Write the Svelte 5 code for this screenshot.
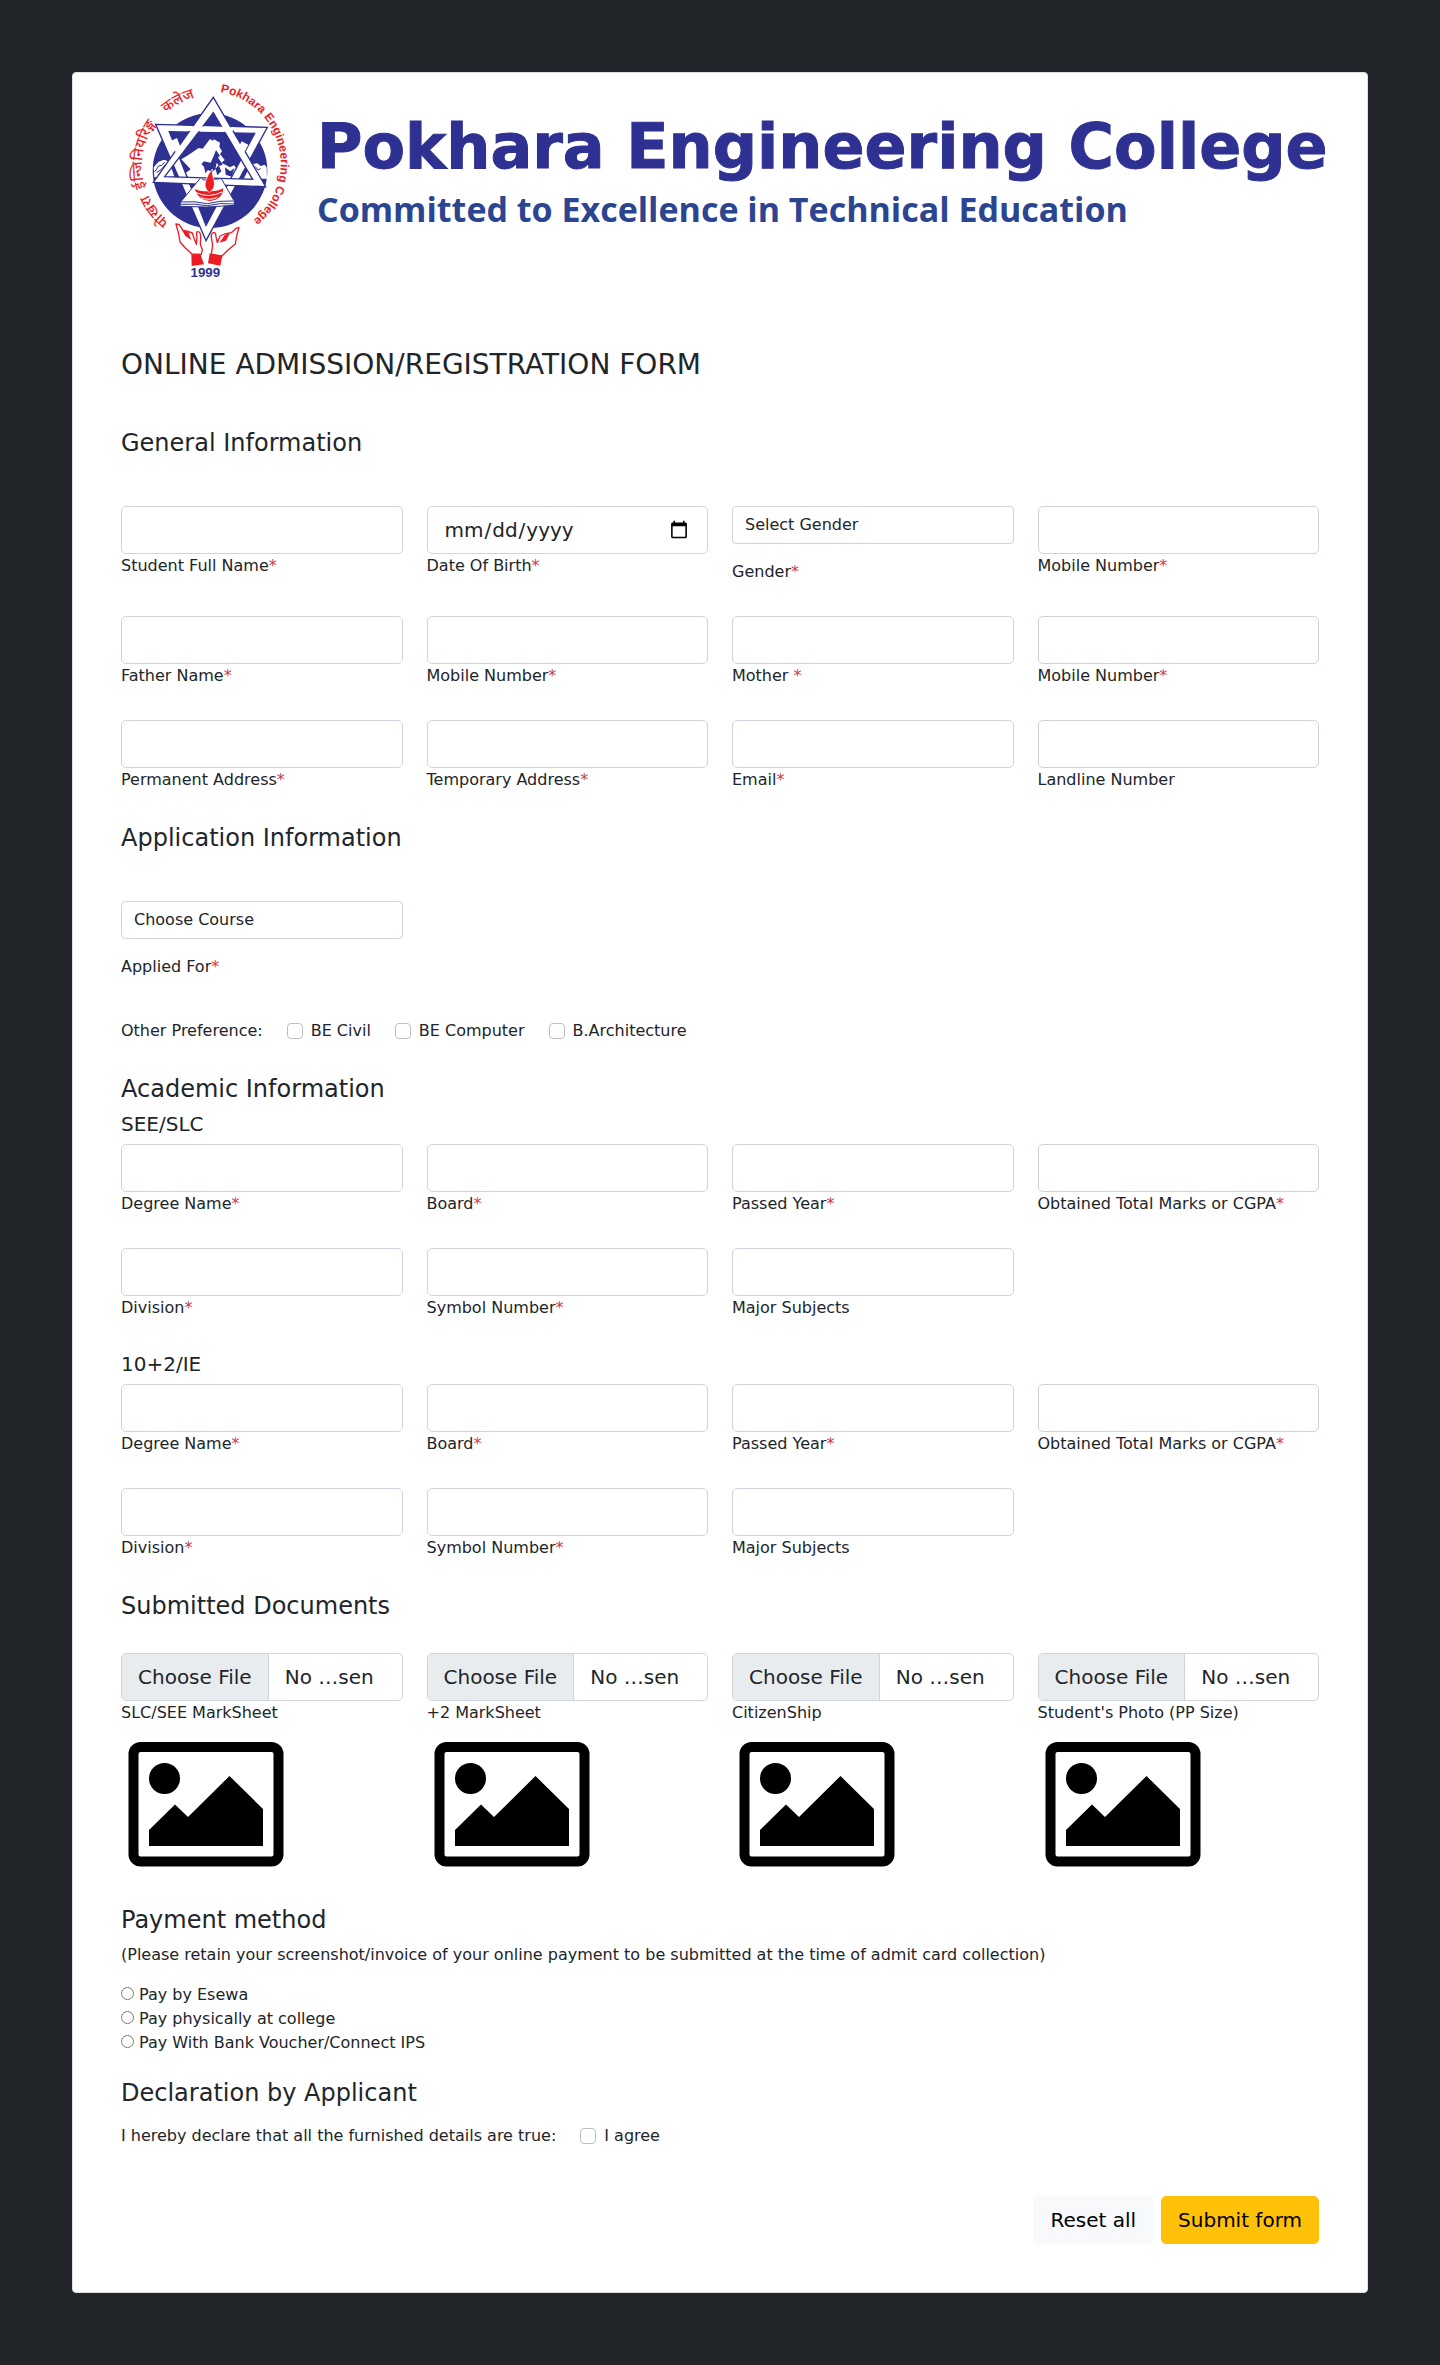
<script>
  const general = [
    [
      { id: 'student', label: 'Student Full Name', req: true },
      { id: 'dob', label: 'Date Of Birth', req: true, type: 'date' },
      { id: 'gender', label: 'Gender', req: true, options: ['Select Gender', 'Male', 'Female', 'Other'] },
      { id: 'mobile', label: 'Mobile Number', req: true, type: 'tel' }
    ],
    [
      { id: 'father', label: 'Father Name', req: true },
      { id: 'father-mobile', label: 'Mobile Number', req: true, type: 'tel' },
      { id: 'mother', label: 'Mother ', req: true },
      { id: 'mother-mobile', label: 'Mobile Number', req: true, type: 'tel' }
    ],
    [
      { id: 'permanent', label: 'Permanent Address', req: true },
      { id: 'temporary', label: 'Temporary Address', req: true },
      { id: 'email', label: 'Email', req: true, type: 'email' },
      { id: 'landline', label: 'Landline Number', type: 'tel' }
    ]
  ];

  const application = [
    { id: 'course', label: 'Applied For', req: true, options: ['Choose Course', 'BE Civil', 'BE Computer', 'B.Architecture'] }
  ];

  const academic = (prefix) => [
    [
      { id: prefix + '-degree', label: 'Degree Name', req: true },
      { id: prefix + '-board', label: 'Board', req: true },
      { id: prefix + '-year', label: 'Passed Year', req: true },
      { id: prefix + '-marks', label: 'Obtained Total Marks or CGPA', req: true }
    ],
    [
      { id: prefix + '-division', label: 'Division', req: true },
      { id: prefix + '-symbol', label: 'Symbol Number', req: true },
      { id: prefix + '-major', label: 'Major Subjects' }
    ]
  ];

  const levels = [
    { title: 'SEE/SLC', rows: academic('see') },
    { title: '10+2/IE', rows: academic('plus2') }
  ];

  const preferences = ['BE Civil', 'BE Computer', 'B.Architecture'];
  const documents = ['SLC/SEE MarkSheet', '+2 MarkSheet', 'CitizenShip', "Student's Photo (PP Size)"];
  const payments = ['Pay by Esewa', 'Pay physically at college', 'Pay With Bank Voucher/Connect IPS'];
</script>

{#snippet fieldRow(fields)}
  <div class="row">
    {#each fields as f}
      <div class="field">
        {#if f.options}
          <select id={f.id} class="select">
            {#each f.options as o}<option>{o}</option>{/each}
          </select>
        {:else}
          <input id={f.id} class="control" type={f.type ?? 'text'} />
        {/if}
        <label for={f.id}>{f.label}{#if f.req}<span class="req">*</span>{/if}</label>
      </div>
    {/each}
  </div>
{/snippet}

<main class="card">
  <header class="banner">
    <svg class="logo" viewBox="33 9 528 636" role="img" aria-label="Pokhara Engineering College emblem">
      <defs>
        <path id="arc-right" d="M331 66A217 217 0 0 1 297 497" />
        <path id="arc-left" d="M179 454A210 210 0 0 1 308 77" />
      </defs>
      <circle cx="300" cy="302" r="172" fill="#2e3192" />
      <path fill="#fff" d="M131 292l14-16 16-7 14 5 12 28 6 18-60 2zM416 296l12-14 14-2 10 8 12-4 6 8 1 34-70 0z" />
      <path fill="none" stroke="#2e3192" stroke-width="3" d="M134 306l12-18 10-2 8-10M140 308l14-10 12-14M436 290l8 10 8-4M440 310l12 14" />
      <path fill="#fff" d="M214 268l20-12 32-22 12 2 22-29 8 5 4-4 18 10-2 12 8 14-6 8 14 18-10 8 26 14 12-6 8 10-26 44H246l-20-30 16-12z" />
      <path fill="#2e3192" d="M274 282l8-8 20 4 10-22 6-16 12 18-6 4 14 22-10 4-8-10-4 20-10 8-12-6-8 10-4-20zM316 296l10-10 8 18-12 12zM345 292l16 12 12-10-8 26-18-6z" />
      <g fill="#fff" stroke="#2e3192" stroke-width="4" fill-rule="evenodd">
        <path d="M137 163L472 172L288 512ZM178 185L288 466L434 190Z" />
        <path d="M310 82L467 350L130 337ZM310 128L164 320L428 328Z" />
      </g>
      <path fill="#fff" d="M224 168l150 4-8 14-150-4zM183 212l18-8 16 42-14 16zM395 214l20 10-20 38-14-22z" />
      <path fill="#fff" stroke="#2e3192" stroke-width="3" d="M273 322L212 396l-2 13 80 2 84-5-2-14-38-66-24 2-30 2z" />
      <path fill="none" stroke="#2e3192" stroke-width="3" d="M212 396q40-4 80 5 36-10 78-8M213 403q40-3 79 4 40-10 80-5" />
      <path fill="#ed1c24" d="M254 357q16 8 44 7 28 0 42-9-2 34-40 38-36-2-46-36z" />
      <path fill="#ed1c24" stroke="#fff" stroke-width="2" d="M307 297q-2 16 5 34 6 24-14 37-18-14-11-35 6-20 20-36z" />
      <path fill="none" stroke="#fff" stroke-width="3" d="M258 368q38 18 78-2M272 382q24 12 50 0" />
      <path fill="#fff" stroke="#ed1c24" stroke-width="4" stroke-linejoin="round" d="M246 552l-20-18-16-18-4-24-8-30 9 1 12 18 10 2 18 6 6 18 6 16 2-22q-4-17 3-16 8 0 8 16l-1 22 6 16-3 14z" />
      <path fill="#ed1c24" d="M206 463l11 18 18 5 9 24-18-12zM244 553l27-1 11 31-37 5z" />
      <path fill="#fff" stroke="#ed1c24" stroke-width="4" stroke-linejoin="round" d="M336 558l18-18 22-18 4-24 7-26-10 4-13 12-20 4-14 6-8 20-4-18q-1-15-8-12-7 2-6 14l4 24-4 28z" />
      <path fill="#ed1c24" d="M360 488l-16 8-16 22 20-6zM299 550l38 7-6 30-37-7z" />
      <text class="ring latin"><textPath href="#arc-right">Pokhara Engineering College</textPath></text>
      <text class="ring nepali"><textPath href="#arc-left">पोखरा</textPath></text>
      <text class="ring nepali"><textPath href="#arc-left" startOffset="126">ईन्जिनियरिङ्ग</textPath></text>
      <text class="ring nepali"><textPath href="#arc-left" startOffset="372">कलेज</textPath></text>
      <text class="year" x="286" y="620">1999</text>
    </svg>
    <div class="names">
      <p class="college">Pokhara Engineering College</p>
      <p class="motto">Committed to Excellence in Technical Education</p>
    </div>
  </header>

  <form onsubmit={(e) => e.preventDefault()}>
    <h1>ONLINE ADMISSION/REGISTRATION FORM</h1>

    <h2 class="spaced">General Information</h2>
    {#each general as r}{@render fieldRow(r)}{/each}

    <h2 class="spaced">Application Information</h2>
    {@render fieldRow(application)}
    <div class="inline prefs">
      <span>Other Preference:</span>
      {#each preferences as p}
        <label class="check"><input type="checkbox" />{p}</label>
      {/each}
    </div>

    <h2>Academic Information</h2>
    {#each levels as l}
      <h3>{l.title}</h3>
      {#each l.rows as r}{@render fieldRow(r)}{/each}
    {/each}

    <h2 class="docs">Submitted Documents</h2>
    <div class="row">
      {#each documents as d, i}
        <div class="field">
          <input id={'doc' + i} class="control file" type="file" />
          <label for={'doc' + i}>{d}</label>
          <svg class="preview" viewBox="0 0 170 149" aria-hidden="true">
            <rect x="12.5" y="22" width="145" height="114.5" rx="7" fill="none" stroke="#000" stroke-width="10" />
            <circle cx="43.5" cy="53.5" r="15.5" />
            <path d="M28 105l26-25.500 13 12.500 41.500-41 33.500 33v37H28z" />
          </svg>
        </div>
      {/each}
    </div>

    <h2>Payment method</h2>
    <p class="note">(Please retain your screenshot/invoice of your online payment to be submitted at the time of admit card collection)</p>
    <div class="radios">
      {#each payments as p}
        <label><input type="radio" name="payment" />{p}</label>
      {/each}
    </div>

    <h2 class="declare">Declaration by Applicant</h2>
    <div class="inline">
      <span>I hereby declare that all the furnished details are true:</span>
      <label class="check"><input type="checkbox" />I agree</label>
    </div>

    <div class="actions">
      <button type="reset" class="btn light">Reset all</button>
      <button type="submit" class="btn warning">Submit form</button>
    </div>
  </form>
</main>

<style>
  :global(body) {
    background: #212529;
    color: #212529;
    font-family: "DejaVu Sans", sans-serif;
    font-size: 16px;
    line-height: 24px;
  }
  .card, .card * { box-sizing: border-box; }
  .card {
    margin: 72px 5%;
    padding: 0 48px 48px;
    background: #fff;
    border: 1px solid #dedfdf;
    border-radius: 4px;
  }
  .banner { display: flex; gap: 20px; height: 274px; }
  .logo { flex: none; width: 176px; height: 212px; }
  .ring { fill: #ed1c24; }
  .latin { font: bold 36px "Liberation Sans", sans-serif; }
  .nepali { font: 500 44px "Noto Sans", "Noto Sans Devanagari", sans-serif; }
  .year { fill: #2e3192; font: bold 40px "Liberation Sans", sans-serif; text-anchor: middle; }
  .names { padding-top: 38px; white-space: nowrap; }
  .names p { margin: 0; }
  .college {
    color: #2e3192;
    font: bold 62px/72px "DejaVu Sans", sans-serif;
    -webkit-text-stroke: 1px #2e3192;
  }
  .names .motto {
    margin-top: 2px;
    color: #2b4590;
    font: 700 34px/48px "Open Sans", sans-serif;
  }
  h1, h2, h3 { margin: 0; font-weight: 400; }
  h1 { font-size: 28px; line-height: 36px; margin-bottom: 46px; }
  h2 { font-size: 24px; line-height: 29px; margin-bottom: 8px; }
  h2.spaced { margin-bottom: 48px; }
  h2.docs { margin-bottom: 32px; }
  h3 { font-size: 20px; line-height: 24px; margin-bottom: 8px; }
  .row {
    display: grid;
    grid-template-columns: repeat(4, minmax(0, 1fr));
    column-gap: 24px;
    margin-bottom: 32px;
  }
  .field { display: flex; flex-direction: column; align-items: flex-start; }
  .req { color: #dc3545; }
  .control, .select {
    width: 100%;
    margin: 0;
    background: #fff;
    border: 1px solid #ced4da;
    color: #212529;
    font-family: inherit;
    appearance: none;
  }
  .control {
    height: 48px;
    padding: 8px 16px;
    border-radius: 5px;
    font-size: 20px;
    line-height: 30px;
  }
  .control::-webkit-datetime-edit-fields-wrapper { padding: 0; }
  .select {
    height: 38px;
    margin-bottom: 16px;
    padding: 6px 36px 6px 12px;
    border-radius: 4px;
    font-size: 16px;
    line-height: 24px;
  }
  .file { overflow: hidden; }
  .file::file-selector-button {
    margin: -8px 16px -8px -16px;
    padding: 8px 16px;
    background: #e9ecef;
    color: #212529;
    border: 0 solid #ced4da;
    border-right-width: 1px;
    border-radius: 0;
    font: inherit;
  }
  .preview { width: 170px; height: 149px; }
  .inline { display: flex; align-items: center; gap: 24px; }
  .prefs { margin: 40px 0 32px; }
  .check { display: flex; align-items: center; gap: 8px; }
  .check input {
    appearance: none;
    width: 16px;
    height: 16px;
    margin: 0;
    background: #fff;
    border: 1px solid #bfbfbf;
    border-radius: 4px;
  }
  .note { margin: 0 0 16px; }
  .radios label { display: flex; align-items: center; gap: 5px; }
  .radios input { width: 13px; height: 13px; margin: 0 0 3px; }
  .declare { margin-top: 24px; margin-bottom: 16px; }
  .actions { display: flex; justify-content: flex-end; gap: 8px; margin-top: 48px; }
  .btn {
    height: 48px;
    padding: 8px 16px;
    border: 1px solid;
    border-radius: 5px;
    color: #000;
    font-family: inherit;
    font-size: 20px;
    line-height: 30px;
  }
  .light { background: #f8f9fa; border-color: #f8f9fa; }
  .warning { background: #ffc107; border-color: #ffc107; }
</style>
